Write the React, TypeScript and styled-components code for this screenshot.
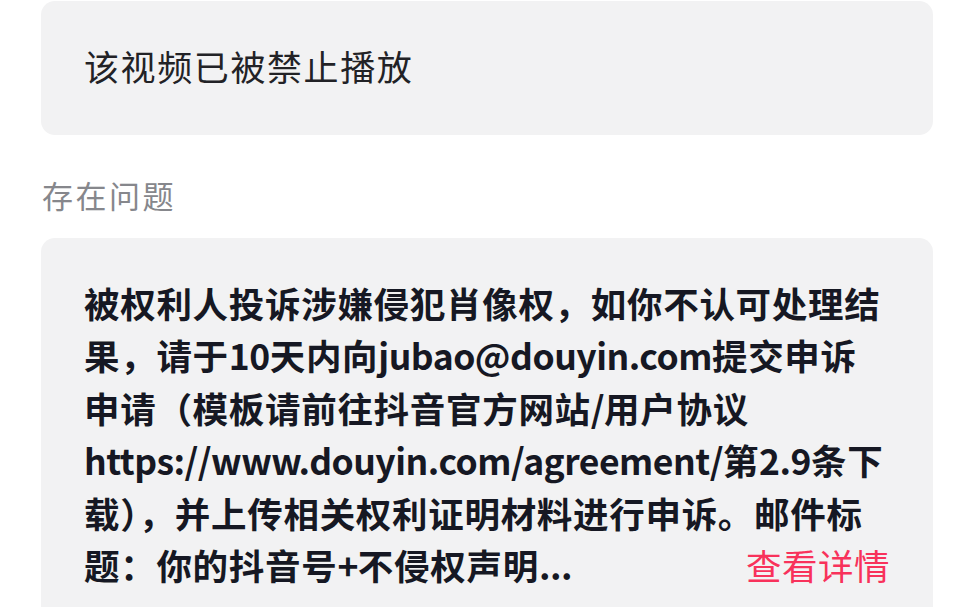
import styled, { createGlobalStyle } from "styled-components";

const Global = createGlobalStyle`
  html, body { margin: 0; padding: 0; background: #ffffff; }
  body { font-family: "Noto Sans CJK SC", "Noto Sans", sans-serif; color: #161823; }
`;

const Page = styled.div`
  width: 972px; height: 607px; overflow: hidden;
  padding: 0 39px 0 41px; box-sizing: border-box;
  display: flex; flex-direction: column;
`;

const StatusCard = styled.div`
  height: 134px; margin-top: 1px;
  background: #f2f2f3; border-radius: 14px;
  display: flex; align-items: center;
  padding: 0 43px 5px 43px; box-sizing: border-box;
`;

const StatusText = styled.div`
  font-size: 35px; letter-spacing: 1.6px; font-weight: 400;
  color: #222226;
`;

const SectionLabel = styled.div`
  margin: 40px 0 23px 1px;
  font-size: 31px; letter-spacing: 2.5px; line-height: 40px;
  color: #86878c;
`;

const ReasonCard = styled.div`
  flex: 1;
  background: #f2f2f3; border-radius: 14px 14px 0 0;
  padding: 38px 43px 0 43px;
`;

const Line = styled.div`
  display: flex; align-items: center; justify-content: space-between;
  height: 52.5px; white-space: nowrap;
  font-size: 35.5px; font-weight: 700; color: #161823;
  letter-spacing: 0.7px;
`;

const Latin = styled.span`
  letter-spacing: -0.5px;
`;

const DetailLink = styled.span`
  font-size: 35.5px; font-weight: 400; color: #f8325b;
  letter-spacing: 0.5px;
`;

const lines = [
  "被权利人投诉涉嫌侵犯肖像权，如你不认可处理结",
  "果，请于10天内向jubao@douyin.com提交申诉",
  "申请（模板请前往抖音官方网站/用户协议",
  "https://www.douyin.com/agreement/第2.9条下",
  "载），并上传相关权利证明材料进行申诉。邮件标",
];

function Mixed({ text }: { text: string }) {
  const parts = text.split(/([A-Za-z0-9@.:\/+]+)/);
  return (
    <span>
      {parts.map((p, i) => (i % 2 === 1 ? <Latin key={i}>{p}</Latin> : p))}
    </span>
  );
}

export default function App() {
  return (
    <>
      <Global />
      <Page>
        <StatusCard>
          <StatusText>该视频已被禁止播放</StatusText>
        </StatusCard>
        <SectionLabel>存在问题</SectionLabel>
        <ReasonCard>
          {lines.map((l) => (
            <Line key={l}>
              <Mixed text={l} />
            </Line>
          ))}
          <Line>
            <Mixed text="题：你的抖音号+不侵权声明..." />
            <DetailLink>查看详情</DetailLink>
          </Line>
        </ReasonCard>
      </Page>
    </>
  );
}
